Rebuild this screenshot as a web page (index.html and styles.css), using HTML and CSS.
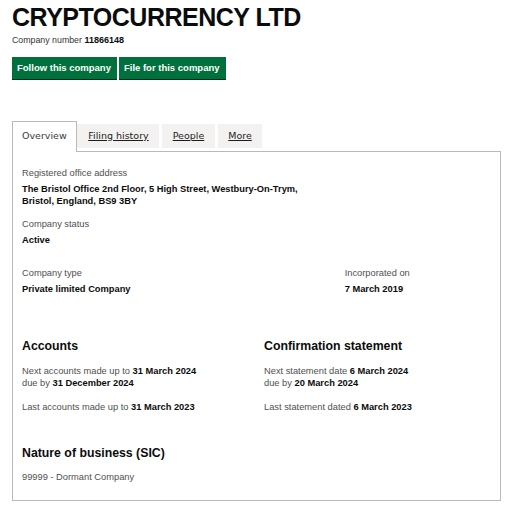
FILE: index.html
```html
<!DOCTYPE html>
<html lang="en">
<head>
<meta charset="utf-8">
<title>CRYPTOCURRENCY LTD</title>
<link rel="stylesheet" href="styles.css">
</head>
<body>
<div class="page">
  <h1 class="title">CRYPTOCURRENCY LTD</h1>
  <p class="company-number">Company number <strong>11866148</strong></p>
  <div class="actions">
    <a class="btn" href="#">Follow this company</a>
    <a class="btn" href="#">File for this company</a>
  </div>

  <div class="tabs">
    <ul class="tab-list">
      <li class="tab tab-active">Overview</li>
      <li class="tab tab-filing"><a href="#">Filing history</a></li>
      <li class="tab"><a href="#">People</a></li>
      <li class="tab"><a href="#">More</a></li>
    </ul>
    <div class="panel">
      <dl class="item item-address">
        <dt class="label">Registered office address</dt>
        <dd class="value">The Bristol Office 2nd Floor, 5 High Street, Westbury-On-Trym,<br>Bristol, England, BS9 3BY</dd>
      </dl>
      <dl class="item item-status">
        <dt class="label">Company status</dt>
        <dd class="value">Active</dd>
      </dl>
      <div class="grid-thirds">
        <dl class="item span-two">
          <dt class="label">Company type</dt>
          <dd class="value">Private limited Company</dd>
        </dl>
        <dl class="item">
          <dt class="label">Incorporated on</dt>
          <dd class="value">7 March 2019</dd>
        </dl>
      </div>
      <div class="grid-halves">
        <div class="section">
          <h2 class="heading">Accounts</h2>
          <p class="text">Next accounts made up to <strong>31 March 2024</strong><br>due by <strong>31 December 2024</strong></p>
          <p class="text text-last">Last accounts made up to <strong>31 March 2023</strong></p>
        </div>
        <div class="section">
          <h2 class="heading">Confirmation statement</h2>
          <p class="text">Next statement date <strong>6 March 2024</strong><br>due by <strong>20 March 2024</strong></p>
          <p class="text text-last">Last statement dated <strong>6 March 2023</strong></p>
        </div>
      </div>
      <h2 class="heading heading-sic">Nature of business (SIC)</h2>
      <p class="text sic">99999 - Dormant Company</p>
    </div>
  </div>
</div>
</body>
</html>
```

FILE: styles.css
```css
* { box-sizing: border-box; }

html, body {
  margin: 0;
  padding: 0;
  background: #ffffff;
}

body {
  font-family: "Liberation Sans", Arial, sans-serif;
  color: #0b0c0c;
}

.page {
  padding: 3px 10px 0 12px;
}

.title {
  margin: 0;
  font-size: 25px;
  line-height: 28px;
  font-weight: bold;
  letter-spacing: -0.5px;
  color: #0b0c0c;
}

.company-number {
  margin: 3px 0 0;
  font-size: 8.8px;
  line-height: 12px;
  color: #333333;
}

.company-number strong {
  color: #0b0c0c;
  font-size: 9px;
}

.actions {
  display: flex;
  gap: 2px;
  margin-top: 11px;
}

.btn {
  display: block;
  height: 22px;
  padding: 0 6px 0 5px;
  background: #00703c;
  color: #ffffff;
  font-size: 9.5px;
  font-weight: bold;
  line-height: 22px;
  text-decoration: none;
  box-shadow: 0 1px 0 #002d18;
}

.tabs {
  margin-top: 42px;
}

.tab-list {
  display: flex;
  align-items: flex-start;
  height: 30px;
  margin: 0;
  padding: 0;
  list-style: none;
  position: relative;
  z-index: 1;
}

.tab {
  margin: 3px 3px 0 0;
  padding: 5.75px 10.5px;
  background: #f3f2f1;
  font-family: "DejaVu Sans", "Liberation Sans", sans-serif;
  font-size: 9.5px;
  line-height: 12.5px;
}

.tab-filing {
  padding-left: 11.5px;
}

.tab a {
  color: #1d1d1d;
  text-decoration: underline;
  text-underline-offset: 1px;
}

.tab-active {
  margin: 0;
  height: 31px;
  padding: 8px 9px 9.5px 9px;
  background: #ffffff;
  border: 1px solid #b9b9b9;
  border-bottom: 0;
  color: #3a3a3a;
}

.panel {
  border: 1px solid #b9b9b9;
  padding: 14.5px 9px 16px 9px;
  height: 350px;
}

.item {
  margin: 0;
}

.label {
  margin: 0 0 3.5px;
  font-size: 9.3px;
  line-height: 12.5px;
  color: #505050;
}

.value {
  margin: 0;
  font-size: 9.3px;
  line-height: 12.5px;
  font-weight: bold;
  color: #0b0c0c;
}

.item-address {
  margin-bottom: 10.3px;
}

.item-status {
  margin-bottom: 20.5px;
}

.grid-thirds {
  display: grid;
  grid-template-columns: repeat(3, 1fr);
  column-gap: 15px;
}

.span-two {
  grid-column: span 2;
}

.grid-halves {
  display: grid;
  grid-template-columns: repeat(2, 1fr);
  column-gap: 15px;
  margin-top: 44px;
}

.heading {
  margin: 0;
  font-size: 12.3px;
  line-height: 15px;
  font-weight: bold;
  color: #0b0c0c;
}

.text {
  margin: 10.5px 0 0;
  font-size: 9.3px;
  line-height: 12.5px;
  color: #505050;
}

.text strong {
  color: #0b0c0c;
}

.text-last {
  margin-top: 10.8px;
}

.heading-sic {
  margin-top: 33.2px;
}

.sic {
  margin-top: 10.2px;
}
```
